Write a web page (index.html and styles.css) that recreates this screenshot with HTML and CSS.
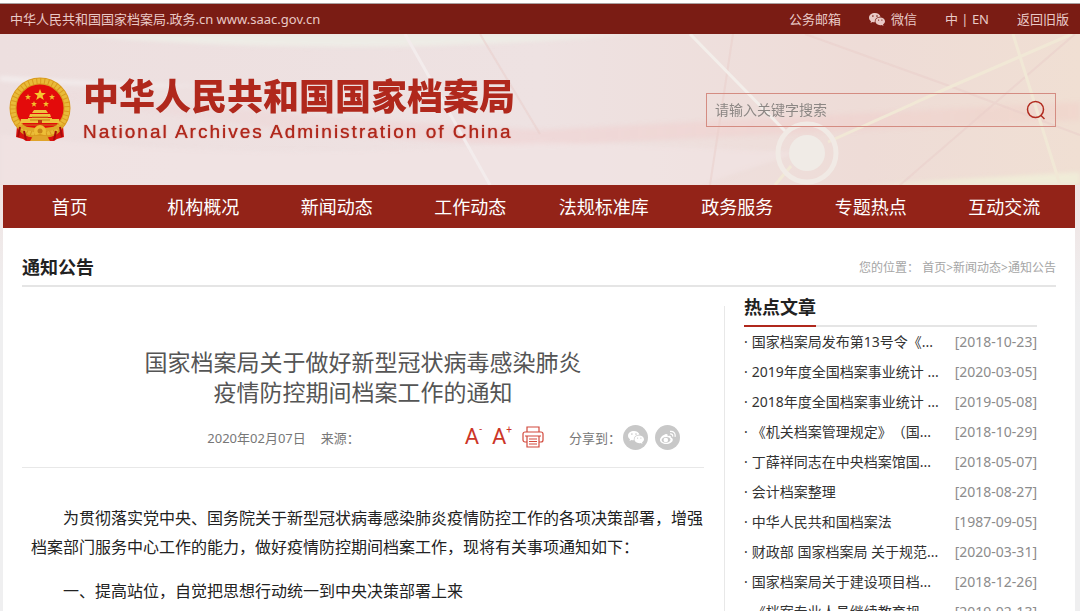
FILE: index.html
```html
<!DOCTYPE html>
<html lang="zh-CN">
<head>
    <meta charset="UTF-8">
    <meta name="viewport" content="width=device-width, initial-scale=1.0">
    <title>国家档案局关于做好新型冠状病毒感染肺炎疫情防控期间档案工作的通知</title>

    <link rel="stylesheet" href="styles.css">
</head>
<body>
    <svg width="0" height="0" class="sprite" aria-hidden="true">
        <symbol id="wechat" viewBox="0 0 16 13">
            <path fill-rule="evenodd" d="M6 0C2.700 0 0 2 0 4.700c0 1.500.800 2.700 2 3.600L1.500 10l2-1c.7.2 1.500.3 2.300.3C5.500 6 8 3.800 11.500 3.800C11 1.500 8.700 0 6 0zM3.900 2.300a.8.8 0 1 1 0 1.600a.8.8 0 0 1 0-1.600zM8 2.300a.8.8 0 1 1 0 1.600a.8.8 0 0 1 0-1.600z"/>
            <path fill-rule="evenodd" d="M11.200 4.400c-2.700 0-4.800 1.700-4.800 3.900s2.100 3.900 4.800 3.900c.6 0 1.100-.1 1.600-.2l1.700.9l-.5-1.500c1.200-.7 2-1.800 2-3.100c0-2.200-2.200-3.900-4.800-3.900zM9.600 6.400a.6.6 0 1 1 0 1.300a.6.6 0 0 1 0-1.300zM12.900 6.400a.6.6 0 1 1 0 1.300a.6.6 0 0 1 0-1.300z"/>
        </symbol>
    </svg>

    <div class="topbar">
        <a href="#" class="domain">中华人民共和国国家档案局.政务.cn www.saac.gov.cn</a>
        <div class="top-links">
            <a href="#">公务邮箱</a>
            <a href="#" class="wechat-link"><svg width="16" height="13"><use href="#wechat"/></svg>微信</a>
            <span><a href="#">中</a> | <a href="#">EN</a></span>
            <a href="#">返回旧版</a>
        </div>
    </div>

    <header class="header">
        <svg class="header-bg" viewBox="0 0 1080 151" preserveAspectRatio="none" aria-hidden="true">
            <defs>
                <linearGradient id="sky" x1="0" y1="0" x2="1" y2="0">
                    <stop offset="0" stop-color="#eddfdf"/>
                    <stop offset=".5" stop-color="#eee2e2"/>
                    <stop offset=".8" stop-color="#eedcd7"/>
                    <stop offset="1" stop-color="#f0dfd3"/>
                </linearGradient>
                <linearGradient id="band" x1="0" y1="0" x2="1" y2="0">
                    <stop offset="0" stop-color="#f0cdce" stop-opacity="0"/>
                    <stop offset=".4" stop-color="#f0cdce" stop-opacity=".7"/>
                    <stop offset="1" stop-color="#f2c9c4" stop-opacity=".5"/>
                </linearGradient>
                <filter id="soft" x="-10%" y="-50%" width="120%" height="200%">
                    <feGaussianBlur stdDeviation="2"/>
                </filter>
            </defs>
            <rect width="1080" height="151" fill="url(#sky)"/>
            <g filter="url(#soft)">
                <path d="M60 0Q340 26 640 0z" fill="#eeece6"/>
                <path d="M0 42Q90 48 210 52Q100 54 0 47z" fill="#f3eded"/>
                <path d="M0 50Q250 82 540 96L1080 68L1080 86L780 100L540 112Q250 104 0 50z" fill="url(#band)" opacity=".65"/>
                <path d="M0 100Q250 130 540 108L800 118L700 151H0z" fill="#f2e5e5" opacity=".6"/>
                <path d="M860 151L1080 138V151z" fill="#f0ecd8"/>
            </g>
            <path d="M405 0L490 151" stroke="#f3ecec" stroke-width="3" fill="none"/>
            <path d="M733 0L710 151M805 0L955 54L1080 101M1075 0L900 151M480 0L540 100" stroke="#e9cdc9" stroke-width="2" opacity=".5" fill="none"/>
            <path d="M690 0L785 97" stroke="#f3eeea" stroke-width="3"/>
            <path d="M1072 0L950 53L828 108M791 132L775 151M1013 0L1060 151" stroke="#f1e8d6" stroke-width="3" fill="none"/>
            <circle cx="807" cy="119" r="29" fill="none" stroke="#f1eae5" stroke-width="5"/>
            <circle cx="807" cy="119" r="18" fill="#f0ebe6"/>
        </svg>

        <a href="#" class="brand">
            <svg class="emblem" width="62" height="66" viewBox="0 0 62 66" aria-hidden="true">
                <path d="M8 49L7 60l7 2l3 2h28l3-2l7-2l-1-11z" fill="#d8130f"/>
                <circle cx="31" cy="31" r="26" fill="#e30b0b"/>
                <circle cx="31" cy="31" r="27" fill="none" stroke="#d99a1e" stroke-width="7"/>
                <circle cx="31" cy="31" r="27" fill="none" stroke="#e9bb38" stroke-width="5" stroke-dasharray="3 1"/>
                <path d="M31 12l1.600 4h4.300l-3.400 2.700l1.300 4.200L31 20.500l-3.800 2.400l1.300-4.200L25.100 16h4.300z" fill="#f6c72f"/>
                <g fill="#f3bd2c">
                    <path id="star" d="M19 17l.8 2.100h2.200l-1.700 1.400l.6 2.200l-1.900-1.300l-1.900 1.300l.6-2.200L16 19.100h2.200z"/>
                    <use href="#star" x="24"/>
                    <use href="#star" x="6" y="7"/>
                    <use href="#star" x="18" y="7"/>
                </g>
                <path d="M25 33h12l2 3H23zM21 37h20l1 3H20zM19 41h24v5H19zM12 42h7v4h-8zM43 42h7l1 4h-8z" fill="#eec33e"/>
                <path d="M23 40h16M21 43h20M15 48h32" stroke="#c78015" stroke-width="1"/>
                <path d="M29 43h4v3h-4z" fill="#c03a10"/>
                <path d="M7 47Q31 55 55 47L53 51Q31 58 9 51z" fill="#dfa829"/>
                <circle cx="31" cy="54" r="6" fill="#eebe36"/>
                <circle cx="31" cy="54" r="2.500" fill="#c98518"/>
                <path d="M11 53Q18 62 31 58Q44 62 51 53" fill="none" stroke="#d99a1e" stroke-width="2"/>
                <path d="M15 54l2 9M47 54l-2 9M11 50l-2 10M51 50l2 10" stroke="#a80b0b" stroke-width="2"/>
                <path d="M24 59h14l3 5H21z" fill="#e0a42a"/>
            </svg>
            <span class="brand-text">
                <strong class="brand-cn">中华人民共和国国家档案局</strong>
                <span class="brand-en">National Archives Administration of China</span>
            </span>
        </a>

        <form class="search" role="search">
            <input type="text" placeholder="请输入关键字搜索" aria-label="请输入关键字搜索">
            <button type="button" aria-label="搜索">
                <svg width="20" height="20" viewBox="0 0 20 20" fill="none" stroke="#b12a1e" stroke-width="1.500">
                    <circle cx="9.500" cy="9.500" r="8"/>
                    <path d="M14.500 15l4 4"/>
                </svg>
            </button>
        </form>
    </header>

    <div class="page">
        <nav class="nav">
            <a href="#">首页</a>
            <a href="#">机构概况</a>
            <a href="#">新闻动态</a>
            <a href="#">工作动态</a>
            <a href="#">法规标准库</a>
            <a href="#">政务服务</a>
            <a href="#">专题热点</a>
            <a href="#">互动交流</a>
        </nav>

        <div class="page-head">
            <h2>通知公告</h2>
            <div class="crumbs">您的位置： <a href="#">首页</a>&gt;<a href="#">新闻动态</a>&gt;<a href="#">通知公告</a></div>
        </div>

        <div class="columns">
            <main class="article">
                <h1>国家档案局关于做好新型冠状病毒感染肺炎<br>疫情防控期间档案工作的通知</h1>

                <div class="meta">
                    <span class="date">2020年02月07日</span>
                    <span>来源：</span>
                    <div class="tools">
                        <button type="button" aria-label="缩小字号">A<sup>-</sup></button>
                        <button type="button" aria-label="放大字号">A<sup>+</sup></button>
                        <button type="button" aria-label="打印">
                            <svg width="22" height="22" viewBox="0 0 22 22" fill="none" stroke="#d2493c" stroke-width="1.200">
                                <path d="M5 6V1h12v5M5 16H3a2 2 0 0 1-2-2V8a2 2 0 0 1 2-2h16a2 2 0 0 1 2 2v6a2 2 0 0 1-2 2h-2"/>
                                <path d="M5 10h12v11H5zM3 10h16M7 13h8M7 15.500h8M7 18h8"/>
                            </svg>
                        </button>
                    </div>
                    <div class="share">
                        <span>分享到：</span>
                        <div class="share-links">
                            <a href="#" aria-label="微信"><svg width="16" height="13"><use href="#wechat"/></svg></a>
                            <a href="#" aria-label="微博">
                                <svg width="17" height="15" viewBox="0 0 17 15">
                                    <path fill-rule="evenodd" d="M6.300 4.200C3.600 5 1 7.700 1 10c0 2.300 2.700 4 6.200 4c3.700 0 6.600-2 6.600-4.300c0-1.200-.8-1.900-2-2.200c.5-1.600-.6-2.400-3.200-1.300c.4-1.500-.3-2.500-2.300-2zM7 6.900c2.600-.2 4.500 1 4.500 2.700s-2 3.100-4.400 3.200c-2.500.1-4.500-1-4.500-2.700S4.500 7.100 7 6.900z"/>
                                    <circle cx="6.800" cy="10" r="2.300"/>
                                    <path d="M11 4c1.800-.4 3 .9 2.600 2.600M11 1.400c3.500-.6 5.800 2 5 5.400" fill="none" stroke="#fff" stroke-width="1.200"/>
                                </svg>
                            </a>
                        </div>
                    </div>
                </div>

                <div class="content">
                    <p>为贯彻落实党中央、国务院关于新型冠状病毒感染肺炎疫情防控工作的各项决策部署，增强档案部门服务中心工作的能力，做好疫情防控期间档案工作，现将有关事项通知如下：</p>
                    <p>一、提高站位，自觉把思想行动统一到中央决策部署上来</p>
                </div>
            </main>

            <aside class="hot">
                <div class="hot-head"><h2>热点文章</h2></div>
                <ul>
                    <li><a href="#">国家档案局发布第13号令《...</a><span>[2018-10-23]</span></li>
                    <li><a href="#">2019年度全国档案事业统计 ...</a><span>[2020-03-05]</span></li>
                    <li><a href="#">2018年度全国档案事业统计 ...</a><span>[2019-05-08]</span></li>
                    <li><a href="#">《机关档案管理规定》（国...</a><span>[2018-10-29]</span></li>
                    <li><a href="#">丁薛祥同志在中央档案馆国...</a><span>[2018-05-07]</span></li>
                    <li><a href="#">会计档案整理</a><span>[2018-08-27]</span></li>
                    <li><a href="#">中华人民共和国档案法</a><span>[1987-09-05]</span></li>
                    <li><a href="#">财政部 国家档案局 关于规范...</a><span>[2020-03-31]</span></li>
                    <li><a href="#">国家档案局关于建设项目档...</a><span>[2018-12-26]</span></li>
                    <li><a href="#">《档案专业人员继续教育规...</a><span>[2019-02-13]</span></li>
                </ul>
            </aside>
        </div>
    </div>
</body>
</html>
```
FILE: styles.css
```css
* {
    margin: 0;
    padding: 0;
    box-sizing: border-box;
}

body {
    font-family: "Noto Sans", "Noto Sans CJK SC", sans-serif;
    font-size: 14px;
    text-spacing-trim: space-all;
    color: #333;
    background: linear-gradient(#fff 3px, #f0e4e3 4px, #f0e4e3 185px, #efeff0 310px);
    background-color: #efeff0;
    background-repeat: no-repeat;
    padding-top: 3px;
}

a {
    color: inherit;
    text-decoration: none;
}

ul {
    list-style: none;
}

button {
    background: none;
    border: none;
    cursor: pointer;
    font-family: inherit;
}

svg {
    display: block;
}

.sprite {
    position: absolute;
}

/* top bar */
.topbar {
    display: flex;
    align-items: center;
    justify-content: space-between;
    height: 31px;
    padding: 0 11px 0 10px;
    border-top: 1px solid #a9a0a0;
    background: #7a1c14;
    color: #e9c9c6;
    font-size: 13px;
    line-height: 20px;
}

.top-links {
    display: flex;
    align-items: center;
    gap: 28px;
}

.wechat-link {
    display: flex;
    align-items: center;
    gap: 6px;
}

.wechat-link svg {
    fill: #e9c9c6;
}

/* header */
.header {
    position: relative;
    display: flex;
    align-items: center;
    justify-content: space-between;
    height: 151px;
    padding: 0 24px 0 9px;
}

.header-bg {
    position: absolute;
    inset: 0;
    width: 100%;
    height: 100%;
}

.brand,
.search {
    position: relative;
}

.brand {
    display: flex;
    align-items: center;
    gap: 12px;
    color: #b0281c;
}

.brand-text {
    display: flex;
    flex-direction: column;
}

.brand-cn {
    font-size: 36px;
    font-weight: 900;
    line-height: 44px;
}

.brand-en {
    font-family: "Liberation Sans", Arial, sans-serif;
    font-size: 19px;
    letter-spacing: 2px;
    line-height: 26px;
    text-shadow: 0 0 1px #b0281c;
}

.search {
    display: flex;
    width: 350px;
    height: 34px;
    border: 1px solid #d48c82;
}

.search input {
    flex: 1;
    min-width: 0;
    padding: 0 8px;
    border: none;
    outline: none;
    background: none;
    font-family: inherit;
    font-size: 14px;
    color: #333;
}

.search input::placeholder {
    color: #8c8784;
}

.search button {
    display: flex;
    align-items: center;
    justify-content: center;
    width: 38px;
}

/* page */
.page {
    margin: 0 5px 0 3px;
    background: #fff;
}

.nav {
    display: flex;
    height: 43px;
    padding-right: 4px;
    background: #932318;
}

.nav a {
    flex: 1;
    color: #fff;
    font-size: 18px;
    line-height: 45px;
    text-align: center;
}

.page-head {
    display: flex;
    align-items: center;
    justify-content: space-between;
    margin: 0 19px;
    padding: 20px 0 0;
    height: 59px;
    border-bottom: 2px solid #e5e5e5;
}

h2 {
    font-size: 18px;
    font-weight: 700;
    line-height: 36px;
    color: #222;
}

.crumbs {
    font-size: 12px;
    color: #a5a5a5;
}

.columns {
    display: flex;
    gap: 20px;
    margin: 0 38px 0 19px;
    padding-top: 1px;
}

/* article */
.article {
    flex: 1;
    min-width: 0;
}

h1 {
    padding-top: 59px;
    font-size: 23px;
    font-weight: 400;
    line-height: 30px;
    text-align: center;
    color: #555;
}

.meta {
    display: flex;
    align-items: center;
    justify-content: flex-end;
    gap: 15px;
    height: 61px;
    padding-right: 24px;
    border-bottom: 1px solid #e8e8e8;
    font-size: 13px;
    color: #777;
}

.tools {
    display: flex;
    align-items: center;
    gap: 10px;
    margin-left: 90px;
}

.tools button {
    display: flex;
    color: #cc3527;
    font-family: Roboto, sans-serif;
    font-size: 22px;
    line-height: 26px;
}

.tools sup {
    font-size: 10px;
    line-height: 12px;
}

.share {
    display: flex;
    align-items: center;
    gap: 2px;
    margin-left: 10px;
}

.share-links {
    display: flex;
    gap: 7px;
}

.share a {
    display: flex;
    align-items: center;
    justify-content: center;
    width: 25px;
    height: 25px;
    border-radius: 50%;
    background: #c8c8c8;
}

.share svg {
    fill: #fff;
}

.content {
    padding: 36px 0 20px 9px;
    font-size: 16px;
    line-height: 29px;
    color: #222;
}

.content p {
    margin-bottom: 15px;
    text-indent: 2em;
}

/* hot list */
.hot {
    flex: 0 0 313px;
    padding-left: 19px;
    margin-top: 18px;
    border-left: 1px solid #e8e8e8;
}

.hot-head {
    display: flex;
    margin-top: -17px;
    border-bottom: 2px solid #e5e5e5;
}

.hot-head h2 {
    margin-bottom: -2px;
    border-bottom: 2px solid #b0281c;
}

.hot li {
    display: flex;
    justify-content: space-between;
    line-height: 30px;
    white-space: nowrap;
}

.hot li a {
    color: #333;
}

.hot li a::before {
    content: "·";
    margin-right: 4px;
}

.hot li span {
    color: #8c8c8c;
}
```
